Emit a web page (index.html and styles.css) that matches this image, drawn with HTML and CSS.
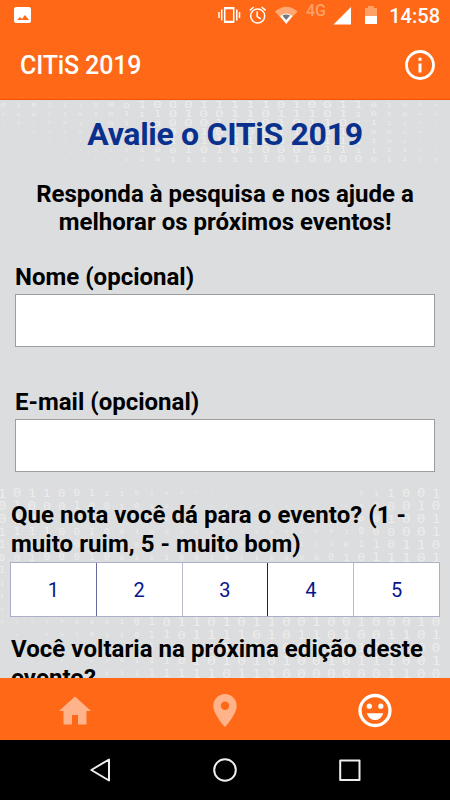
FILE: index.html
```html
<!DOCTYPE html>
<html lang="pt-BR">
<head>
<meta charset="utf-8">
<title>CITiS 2019</title>
<link rel="stylesheet" href="styles.css">
</head>
<body>
<div class="screen">
  <header class="header">
    <div class="status">
      <svg width="450" height="30" viewBox="0 0 450 30">
        <path fill="#fff" fill-rule="evenodd" d="M16 7h13q2 0 2 2v12q0 2-2 2H16q-2 0-2-2V9q0-2 2-2zm1 13h12l-4-5-3 4-2-2z"/>
        <g fill="none" stroke="#fff" stroke-width="1.5">
          <path d="M224.7 7.7h9v14.6h-9zM221.7 9.5v11M219 12v6M236.8 9.5v11M239.5 12v6"/>
          <path stroke-width="2" d="M224 8.2h10M224 21.8h10"/>
          <circle cx="257.7" cy="16" r="7"/>
          <path d="M257.2 11.5v5l3.5 2.4M249.8 10.4l4-3.4M265.6 10.4l-4-3.4"/>
        </g>
        <path fill="#ffa875" d="M275 11.4q11.500-9.500 22.500 0L286.200 24z"/>
        <path fill="#fff" d="M280 16q6.200-5 12.400 0l-6.200 7.700z"/>
        <path fill="#777" d="M282.300 15.500q3.800-2.200 7.800 0l-3.900 4.500z"/>
        <path fill="#fff" d="M333.500 24.500H351V7z"/>
        <path fill="#ffa167" d="M365 8h3V6h6v2h3v8h-12z"/>
        <path fill="#fff" d="M365 16h12v8h-12z"/>
      </svg>
      <span class="network">4G</span>
      <span class="clock">14:58</span>
    </div>
    <div class="toolbar">
      <span class="app-name">CITiS 2019</span>
      <svg width="30" height="30" viewBox="0 0 30 30"><circle cx="15" cy="15" r="13.500" fill="none" stroke="#fff" stroke-width="2.800"/><path fill="#fff" d="M13.500 7.700h3v3h-3zM13.500 13.500h3v9h-3z"/></svg>
    </div>
  </header>
  <main class="content">
    <svg class="binary" id="binary" width="450" height="578" viewBox="0 100 450 578" aria-hidden="true"></svg>
    <h1 class="title">Avalie o CITiS 2019</h1>
    <p class="intro">Responda à pesquisa e nos ajude a<br>melhorar os próximos eventos!</p>
    <div class="field">
      <label class="label" for="nome">Nome (opcional)</label>
      <input class="input" id="nome" type="text">
    </div>
    <div class="field">
      <label class="label" for="email">E-mail (opcional)</label>
      <input class="input" id="email" type="text">
    </div>
    <p class="question">Que nota você dá para o evento? (1 -<br>muito ruim, 5 - muito bom)</p>
    <div class="rating">
      <span class="rate">1</span><span class="rate">2</span><span class="rate">3</span><span class="rate">4</span><span class="rate">5</span>
    </div>
    <p class="question second">Você voltaria na próxima edição deste<br>evento?</p>
  </main>
  <nav class="tabs">
    <svg class="tab" viewBox="0 0 150 62"><path fill="#ffb38a" d="M75 18.500L91 33h-4.500v13.500h-8.500v-9.500h-6v9.500h-8.500V33H59z"/></svg>
    <svg class="tab" viewBox="0 0 150 62"><path fill="#ffb38a" fill-rule="evenodd" d="M75 16c-6.500 0-11.700 5.200-11.700 11.700C63.300 36.500 75 49 75 49s11.700-12.500 11.700-21.300C86.700 21.200 81.500 16 75 16zm0 16a4.200 4.200 0 1 1 0-8.400 4.200 4.200 0 0 1 0 8.400z"/></svg>
    <svg class="tab" viewBox="0 0 150 62"><circle cx="75" cy="32.500" r="15" fill="none" stroke="#fff" stroke-width="3.300"/><circle cx="69.300" cy="28.200" r="2.600" fill="#fff"/><circle cx="80.800" cy="28.200" r="2.600" fill="#fff"/><path fill="#fff" d="M66.700 35.300h16.600q-2.300 6.800-8.300 6.800t-8.300-6.800z"/></svg>
  </nav>
  <footer class="system">
    <svg width="450" height="60" viewBox="0 0 450 60" fill="none" stroke="#eee" stroke-width="2" stroke-linejoin="round"><path d="M109 19.500v21L91.300 30z"/><circle cx="225" cy="30" r="10.800"/><path d="M340.200 20.500h19.300V40h-19.300z"/></svg>
  </footer>
</div>
<script src="binary.js"></script>
</body>
</html>
```
FILE: styles.css
```css
* { box-sizing: border-box; }
body { margin: 0; font-family: Roboto, sans-serif; background: #000; }
.screen { width: 450px; height: 800px; display: flex; flex-direction: column; overflow: hidden; }
.header { height: 100px; background: #ff6816; border-bottom: 1px solid #fb5104; color: #fff; flex: none; }
.status { height: 30px; position: relative; }
.status svg { display: block; }
.network { position: absolute; left: 306px; top: 2px; font-size: 16px; line-height: 18px; font-weight: 500; color: #ffa167; }
.clock { position: absolute; right: 10px; top: 4px; font-size: 20px; line-height: 24px; font-weight: 500; }
.toolbar { height: 70px; display: flex; align-items: center; justify-content: space-between; padding: 0 15px 0 20px; }
.app-name { font-size: 25px; font-weight: 500; letter-spacing: -0.15px; }
.content { position: relative; height: 578px; background: #dcdddf; overflow: hidden; flex: none; color: #000; }
.content > * { position: relative; }
.content > .binary { position: absolute; left: 0; top: 0; }
.binary text { font-family: "DejaVu Sans Mono", monospace; fill: #ececeb; text-anchor: middle; }
.title { margin: 0; padding-top: 15px; text-align: center; font-size: 32px; line-height: 38px; font-weight: 700; letter-spacing: -0.3px; color: #08308c; }
.intro, .question { margin: 0; font-size: 24px; line-height: 28px; font-weight: 700; }
.intro { margin-top: 27px; text-align: center; }
.field { margin: 0 15px; }
.intro + .field { margin-top: 27px; }
.field + .field { margin-top: 41px; }
.label { display: block; font-size: 24px; line-height: 28px; font-weight: 700; }
.input { display: block; width: 100%; height: 53px; margin-top: 3px; border: 1px solid #9c9d9e; border-radius: 0; background: #fff; padding: 0 10px; }
.question { margin: 29px 0 0 11px; line-height: 28.5px; letter-spacing: 0.05px; white-space: nowrap; }
.rating { display: flex; height: 55px; margin: 4px 10px 0; border: 1px solid #abb0c8; background: #fff; }
.rate { flex: 1; display: flex; align-items: center; justify-content: center; border-right: 1px solid #b8bad4; color: #07168a; font-size: 20px; }
.rate:first-child { border-right-color: #67699f; }
.rate:nth-child(3) { border-right-color: #0b2484; }
.rate:last-child { border-right: 0; }
.question.second { margin-top: 18px; }
.tabs { height: 62px; display: flex; background: #ff6816; flex: none; }
.tab { width: 150px; height: 62px; }
.system { height: 60px; background: #000; flex: none; }
.system svg { display: block; }
```
FILE: binary.js
```js
const layer = document.getElementById("binary");

// Each row: digits, then [column, scale] stops interpolated across the row.
const upper = [
  ["01011100010001111101001101000", [[0, .6], [6, .6], [10, 1], [22, 1], [28, .35]]],
  ["10011010111010011011101101000", [[0, .5], [6, .55], [11, 1], [22, 1], [28, .3]]],
  ["10110110110000110010110111110", [[0, .3], [6, .5], [12, 1], [22, 1], [28, .25]]],
  ["01011011011001010011001100001", [[0, .2], [6, .4], [12, 1], [22, .9], [28, .2]]],
  ["10100110100101101001011110111", [[0, .15], [6, .35], [12, 1], [22, .9], [28, .2]]],
  ["01101011110010101000111111111", [[0, .1], [6, .3], [12, .9], [22, 1], [28, .3]]],
  ["10110111110111111101000001110", [[0, .1], [6, .3], [12, .8], [22, 1], [28, .4]]]
];
const lower = [
  ["101100111010000100101101111001", [[0, 1], [4, .8], [14, .2], [22, .1], [26, .8], [29, 1]]],
  ["010001001010010011001010000010", [[0, 1], [5, .8], [14, .25], [22, .15], [27, 1], [29, 1]]],
  ["010110011011001010010001001001", [[0, 1], [5, .8], [14, .3], [22, .3], [26, .9], [29, 1]]],
  ["111100100100110010001001000001", [[0, .9], [6, .7], [14, .3], [22, .4], [27, 1], [29, 1]]],
  ["110010110010100100101110110110", [[0, .8], [6, .65], [14, .35], [22, .45], [27, 1], [29, 1]]],
  ["001000100111001011100001011101", [[0, .75], [9, .6], [16, .5], [20, .5], [26, 1], [29, 1]]],
  ["101101001011001011010010101100", [[0, .7], [14, .6], [20, .8], [25, 1], [29, 1]]],
  ["110010110100101101001001011010", [[0, .6], [14, .7], [20, .9], [25, 1], [29, 1]]],
  ["101101001010110100100110100101", [[0, .5], [14, .8], [20, 1], [29, 1]]],
  ["010010110101001011010101101001", [[0, .4], [12, .8], [18, 1], [29, 1]]],
  ["011100001010110101100100100010", [[0, .3], [7, .5], [12, 1], [29, 1]]],
  ["101001011011011110101101001101", [[0, .2], [8, .5], [13, 1], [29, 1]]],
  ["010010110010100110100100101100", [[0, .15], [8, .5], [13, 1], [29, 1]]],
  ["101001010111010101010010111001", [[0, .1], [8, .4], [13, 1], [29, 1]]],
  ["010010111111111011100000001100", [[0, .1], [8, .5], [13, 1], [29, 1]]]
];

function scaleAt(stops, col) {
  for (let i = 1; i < stops.length; i++) {
    const [c0, s0] = stops[i - 1];
    const [c1, s1] = stops[i];
    if (col <= c1) return s0 + (s1 - s0) * (col - c0) / (c1 - c0);
  }
  return stops[stops.length - 1][1];
}

function draw(rows, x0, dx, y0, dy, sx, size) {
  rows.forEach(([digits, stops], row) => {
    [...digits].forEach((digit, col) => {
      const s = scaleAt(stops, col);
      const t = document.createElementNS("http://www.w3.org/2000/svg", "text");
      t.setAttribute("transform", `translate(${x0 + col * dx} ${y0 + row * dy + size * s * .36}) scale(${s * sx} ${s})`);
      t.setAttribute("font-size", size);
      t.textContent = digit;
      layer.appendChild(t);
    });
  });
}

draw(upper, 3, 15.45, 105, 9.05, 1.7, 8.8);
draw(lower, 2, 14.97, 493, 12.86, 1.2, 12.5);
```
